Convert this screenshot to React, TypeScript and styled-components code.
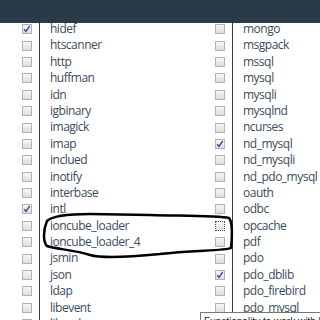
import React from 'react';
import styled, {createGlobalStyle} from 'styled-components';

type Ext = {name: string; checked?: boolean; focused?: boolean};

const left: Ext[] = [
    {name: 'hidef', checked: true}, {name: 'htscanner'}, {name: 'http'}, {name: 'huffman'},
    {name: 'idn'}, {name: 'igbinary'}, {name: 'imagick'}, {name: 'imap'}, {name: 'inclued'},
    {name: 'inotify'}, {name: 'interbase'}, {name: 'intl', checked: true}, {name: 'ioncube_loader'},
    {name: 'ioncube_loader_4'}, {name: 'jsmin'}, {name: 'json'}, {name: 'ldap'}, {name: 'libevent'},
    {name: 'libxml'},
];

const right: Ext[] = [
    {name: 'mongo'}, {name: 'msgpack'}, {name: 'mssql'}, {name: 'mysql'}, {name: 'mysqli'},
    {name: 'mysqlnd'}, {name: 'ncurses'}, {name: 'nd_mysql', checked: true}, {name: 'nd_mysqli'},
    {name: 'nd_pdo_mysql'}, {name: 'oauth'}, {name: 'odbc'}, {name: 'opcache', focused: true},
    {name: 'pdf'}, {name: 'pdo'}, {name: 'pdo_dblib', checked: true}, {name: 'pdo_firebird'},
    {name: 'pdo_mysql'}, {name: 'pdo_oci'},
];

const Check: React.FC<{checked?: boolean; focused?: boolean}> = ({checked, focused}) => (
    <Box $focused={focused}>
        {checked && (
            <svg width="8" height="8" viewBox="0 0 8 8">
                <path d="M1.2 4.2 L3 6.4 L6.8 0.8" fill="none" stroke="#2b48a0" strokeWidth="1.4" />
            </svg>
        )}
    </Box>
);

const App: React.FunctionComponent = () => {
    return (
        <>
            <GlobalStyle />
            <Header />
            <Table>
                {left.map((l, i) => (
                    <React.Fragment key={l.name}>
                        <CheckCell><Check checked={l.checked} focused={l.focused} /></CheckCell>
                        <NameCell>{l.name}</NameCell>
                        <CheckCell><Check checked={right[i].checked} focused={right[i].focused} /></CheckCell>
                        <NameCell>{right[i].name}</NameCell>
                    </React.Fragment>
                ))}
            </Table>
            <Scribble width="320" height="320" viewBox="0 0 320 320">
                <path
                    d="M47 221 C52 216, 70 214, 90 214 L150 215 C190 216, 220 216, 229 218 C233 222, 232 240, 231 248 C225 251, 190 250, 160 254 C130 257, 100 258, 90 255 C75 250, 55 249, 47 246 C43 242, 43 230, 47 221"
                    fill="none" stroke="#000" strokeWidth="2.5" strokeLinecap="round" strokeLinejoin="round"
                />
            </Scribble>
            <Tooltip>Functionality to work with libxml</Tooltip>
        </>
    );
}

const GlobalStyle = createGlobalStyle`
    html, body {
        margin: 0;
        padding: 0;
        background: #fff;
        overflow: hidden;
    }
    body {
        width: 320px;
        height: 320px;
        font-family: "Open Sans", sans-serif;
    }
`;

const Header = styled.div`
    position: fixed;
    top: 0;
    left: 0;
    right: 0;
    height: 23px;
    background-color: #2b3a4b;
    z-index: 2;
`;

const Table = styled.div`
    display: grid;
    grid-template-columns: 39px 154px 39px 87px;
    grid-auto-rows: 16.4px;
    padding-top: 21px;
`;

const CheckCell = styled.div`
    display: flex;
    align-items: center;
    justify-content: flex-end;
    padding-right: 7px;
`;

const NameCell = styled.div`
    border-left: 1px solid #3a3a3a;
    padding-left: 10px;
    font-size: 12px;
    letter-spacing: -0.5px;
    line-height: 16.4px;
    color: #3b4c5e;
    white-space: nowrap;
`;

const Box = styled.span<{$focused?: boolean}>`
    box-sizing: border-box;
    width: 10px;
    height: 10px;
    display: flex;
    align-items: center;
    justify-content: center;
    border: 1px ${p => (p.$focused ? 'dotted #555' : 'solid #b2b2b2')};
    background: linear-gradient(#f6f6f6, #dedede);
`;

const Scribble = styled.svg`
    position: absolute;
    top: 0;
    left: 0;
    pointer-events: none;
`;

const Tooltip = styled.div`
    position: absolute;
    left: 200px;
    right: 0;
    top: 312px;
    padding: 3px 3px 0;
    background: #fff;
    border: 1px solid #767676;
    border-right: none;
    font-family: "Liberation Sans", sans-serif;
    font-size: 10px;
    color: #222;
    white-space: nowrap;
    overflow: hidden;
    z-index: 3;
`;

export default App;
